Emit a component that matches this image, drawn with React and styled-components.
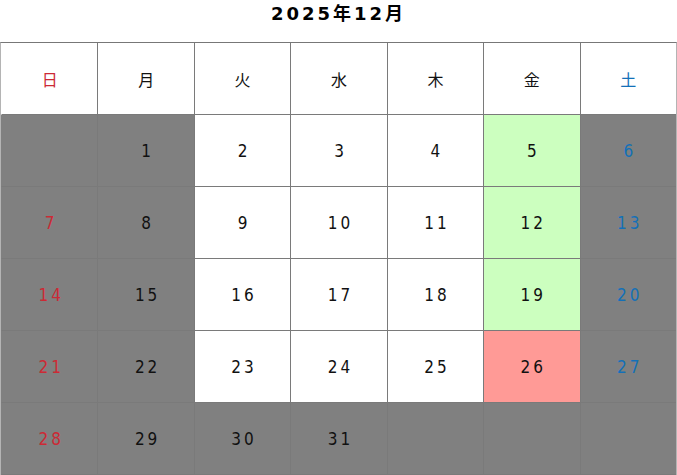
import React from "react";
import styled, { createGlobalStyle } from "styled-components";

const Global = createGlobalStyle`
  html, body { margin: 0; padding: 0; background: #fff; }
  body { font-family: "DejaVu Sans", "Noto Sans CJK JP", sans-serif; }
`;

const Page = styled.div`
  width: 677px;
  display: flex;
  flex-direction: column;
`;

const Title = styled.h1`
  margin: 0;
  height: 42px;
  box-sizing: border-box;
  padding-top: 2px;
  text-align: center;
  font-family: "DejaVu Sans", "Noto Sans CJK JP", sans-serif;
  font-size: 18px;
  font-weight: bold;
  letter-spacing: 3px;
  line-height: 24px;
  color: #000;
`;

const Grid = styled.div`
  display: grid;
  grid-template-columns: repeat(7, 1fr);
  grid-auto-rows: 72px;
  border-left: 1px solid #b4b4b4;
  border-right: 1px solid #b4b4b4;
  border-top: 1px solid #777;
`;

const colors = {
  white: "#ffffff",
  gray: "#808080",
  green: "#ccffbf",
  red: "#ff9a96",
};

const textColors = {
  sun: "#cc2a35",
  sat: "#1370b8",
  normal: "#111",
};

const Cell = styled.div`
  box-sizing: border-box;
  display: flex;
  align-items: center;
  justify-content: center;
  background: ${(p) => colors[p.$bg]};
  color: ${(p) => textColors[p.$tone]};
  border-left: 1px solid ${(p) => (p.$first ? "transparent" : "#7a7a7a")};
  border-bottom: 1px solid #7a7a7a;
  font-family: "DejaVu Sans Condensed", "Noto Sans CJK JP", sans-serif;
  font-size: 17px;
  letter-spacing: 3px;
  padding-left: 3px;
`;

const Head = styled(Cell)`
  font-family: "Noto Sans CJK JP", sans-serif;
  font-size: 16px;
  letter-spacing: 0;
  padding-left: 0;
`;

const days = ["日", "月", "火", "水", "木", "金", "土"];

const weeks = [
  [null, 1, 2, 3, 4, 5, 6],
  [7, 8, 9, 10, 11, 12, 13],
  [14, 15, 16, 17, 18, 19, 20],
  [21, 22, 23, 24, 25, 26, 27],
  [28, 29, 30, 31, null, null, null],
];

function bgFor(d, col) {
  if (d === null) return "gray";
  if (col === 0 || col === 1 || col === 6) return "gray";
  if (d >= 28) return "gray";
  if (d === 26) return "red";
  if (col === 5) return "green";
  return "white";
}

function toneFor(col) {
  if (col === 0) return "sun";
  if (col === 6) return "sat";
  return "normal";
}

export default function App() {
  return (
    <Page>
      <Global />
      <Title>2025年12月</Title>
      <Grid>
        {days.map((d, i) => (
          <Head key={d} $bg="white" $tone={toneFor(i)} $first={i === 0}>
            {d}
          </Head>
        ))}
        {weeks.map((w, wi) =>
          w.map((d, ci) => (
            <Cell
              key={`${wi}-${ci}`}
              $bg={bgFor(d, ci)}
              $tone={toneFor(ci)}
              $first={ci === 0}
            >
              {d ?? ""}
            </Cell>
          ))
        )}
      </Grid>
    </Page>
  );
}
